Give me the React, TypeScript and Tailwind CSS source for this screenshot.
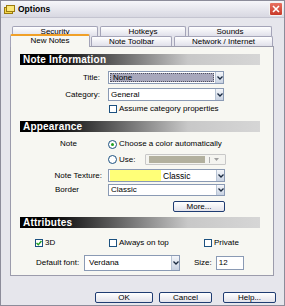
import React from "react";

const Chevron = () => (
  <svg width="6" height="4" viewBox="0 0 6 4">
    <path d="M0.5 0.5 L3 3 L5.5 0.5" fill="none" stroke="#1a2a40" strokeWidth="1.3" />
  </svg>
);

const DropBtn = ({ h }: { h: number }) => (
  <div
    className="w-[8px] flex items-center justify-center border-l border-[#b8c4d4] bg-gradient-to-b from-[#f4f6fa] to-[#c8d2e2]"
    style={{ height: h }}
  >
    <Chevron />
  </div>
);

const Header = ({ text }: { text: string }) => (
  <div className="ml-[9px] w-[240px] h-[11px] bg-[linear-gradient(to_right,#000_0%,#000_12%,#c8c8c8_70%,#d6d6d6_100%)] text-white font-bold text-[10px] leading-[11px] pl-[3px] tracking-[0.2px]">
    {text}
  </div>
);

const CheckBox = ({ checked }: { checked?: boolean }) => (
  <div className="w-[8px] h-[8px] border border-[#1c5180] bg-white flex items-center justify-center shrink-0">
    {checked && (
      <svg width="6" height="6" viewBox="0 0 6 6">
        <path d="M0.5 3 L2.3 4.8 L5.5 1" fill="none" stroke="#21a121" strokeWidth="1.4" />
      </svg>
    )}
  </div>
);

const Radio = ({ checked }: { checked?: boolean }) => (
  <div className="w-[9px] h-[9px] rounded-full border border-[#1c5180] bg-white flex items-center justify-center shrink-0">
    {checked && <div className="w-[3px] h-[3px] rounded-full bg-[#21a121]" />}
  </div>
);

const XPButton = ({ w, children }: { w: number; children: React.ReactNode }) => (
  <div
    className="h-[11px] rounded-[2px] border border-[#1f3c72] bg-gradient-to-b from-white to-[#e2e2ea] flex items-center justify-center text-[8px] leading-[9px]"
    style={{ width: w }}
  >
    {children}
  </div>
);

export default function App() {
  return (
    <div className="w-[285px] h-[306px] bg-[#e6e6ec] border border-[#8c8c9a] overflow-hidden font-['Liberation_Sans',Arial,sans-serif] text-black text-[8px] leading-[10px] flex flex-col">
      {/* Title bar */}
      <div className="h-[17px] flex items-center bg-gradient-to-b from-[#f6f6fa] to-[#d8d8e2] border-b border-[#c4c4d0] shrink-0">
        <svg width="11" height="9" viewBox="0 0 11 9" className="ml-[3px]">
          <rect x="0.5" y="2.5" width="8" height="6" fill="#f7d94a" stroke="#9a7a10" />
          <rect x="2.5" y="0.5" width="8" height="6" fill="#fbe77a" stroke="#9a7a10" />
        </svg>
        <span className="ml-[3px] font-bold text-[8.5px]">Options</span>
        <div className="ml-auto mr-[1px] w-[14px] h-[14px] rounded-[2px] border border-[#f2f2f2] bg-gradient-to-b from-[#e87060] to-[#c83828] flex items-center justify-center">
          <svg width="8" height="8" viewBox="0 0 8 8">
            <path d="M1 1 L7 7 M7 1 L1 7" stroke="white" strokeWidth="1.6" />
          </svg>
        </div>
      </div>

      {/* Tabs */}
      <div className="mt-[8px] flex flex-col">
        <div className="ml-[11px] flex gap-[2px] h-[10px]">
          {[
            ["Security", 86],
            ["Hotkeys", 86],
            ["Sounds", 84],
          ].map(([t, w]) => (
            <div
              key={t as string}
              className="h-[10px] rounded-t-[2px] border border-b-0 border-[#a4a4b8] bg-gradient-to-b from-white to-[#e0e0ea] text-center text-[8px] leading-[10px] overflow-hidden"
              style={{ width: w as number }}
            >
              {t}
            </div>
          ))}
        </div>
        <div className="ml-[9px] flex h-[10px]">
          <div className="relative z-10 -mt-[2px] w-[80px] h-[13px] border-t-2 border-t-[#f0a028] border-x border-x-[#a4a4b8] bg-[#f7f7f2] text-center text-[8px] leading-[10px] rounded-t-[2px]">
            New Notes
          </div>
          <div className="ml-[1px] w-[81px] h-[10px] rounded-t-[2px] border border-b-0 border-[#a4a4b8] bg-gradient-to-b from-white to-[#e0e0ea] text-center text-[8px] leading-[10px]">
            Note Toolbar
          </div>
          <div className="ml-[2px] w-[99px] h-[10px] rounded-t-[2px] border border-b-0 border-[#a4a4b8] bg-gradient-to-b from-white to-[#e0e0ea] text-center text-[8px] leading-[10px]">
            Network / Internet
          </div>
        </div>
      </div>

      {/* Panel */}
      <div className="ml-[9px] w-[264px] h-[230px] border border-[#9c9cac] bg-[#f7f7f2] flex flex-col">
        <div className="mt-[7px]">
          <Header text="Note Information" />
        </div>

        {/* Title */}
        <div className="mt-[6px] flex items-center h-[13px]">
          <div className="w-[89px] text-right">Title:</div>
          <div className="ml-[8px] w-[116px] h-[13px] border border-[#8a9ab4] bg-white flex">
            <div className="flex-1 m-[1px] bg-[#a8a8bc] border border-dotted border-[#505060] pl-[2px] text-[8px] leading-[8px] flex items-center">
              None
            </div>
            <DropBtn h={11} />
          </div>
        </div>

        {/* Category */}
        <div className="mt-[4px] flex items-center h-[13px]">
          <div className="w-[89px] text-right">Category:</div>
          <div className="ml-[8px] w-[116px] h-[13px] border border-[#8a9ab4] bg-white flex">
            <div className="flex-1 pl-[2px] flex items-center">General</div>
            <DropBtn h={11} />
          </div>
        </div>

        {/* Assume */}
        <div className="mt-[3px] flex items-center h-[10px] pl-[98px]">
          <CheckBox />
          <span className="ml-[2px]">Assume category properties</span>
        </div>

        <div className="mt-[7px]">
          <Header text="Appearance" />
        </div>

        {/* Note radio */}
        <div className="mt-[7px] flex items-center h-[10px]">
          <div className="w-[97px] pl-[49px]">Note</div>
          <Radio checked />
          <span className="ml-[2px]">Choose a color automatically</span>
        </div>

        {/* Use */}
        <div className="mt-[5px] flex items-center h-[11px]">
          <div className="w-[97px]" />
          <Radio />
          <span className="ml-[2px]">Use:</span>
          <div className="ml-[10px] w-[81px] h-[11px] border border-[#c8c8c8] rounded-[1px] bg-[#f4f4f0] flex items-center">
            <div className="ml-[3px] w-[56px] h-[7px] bg-[#b2b09e]" />
            <div className="ml-[4px] w-px h-[6px] bg-[#b0b0b0]" />
            <svg width="5" height="3" viewBox="0 0 5 3" className="ml-[4px]">
              <path d="M0 0 L5 0 L2.5 3 Z" fill="#a0a0a0" />
            </svg>
          </div>
        </div>

        {/* Note Texture */}
        <div className="mt-[4px] flex items-center h-[13px]">
          <div className="w-[91px] text-right">Note Texture:</div>
          <div className="ml-[6px] w-[117px] h-[13px] border border-[#8a9ab4] bg-white flex">
            <div className="flex-1 flex items-center">
              <div className="ml-[1px] w-[51px] h-[11px] bg-[#ffff78]" />
              <span className="ml-[2px] text-[8.5px]">Classic</span>
            </div>
            <DropBtn h={11} />
          </div>
        </div>

        {/* Border */}
        <div className="mt-[2px] flex items-center h-[12px]">
          <div className="w-[97px] pl-[44px]">Border</div>
          <div className="w-[117px] h-[12px] border border-[#8a9ab4] bg-white flex">
            <div className="flex-1 pl-[2px] flex items-center">Classic</div>
            <DropBtn h={10} />
          </div>
        </div>

        {/* More */}
        <div className="mt-[5px] flex pl-[162px]">
          <XPButton w={52}>More...</XPButton>
        </div>

        <div className="mt-[5px]">
          <Header text="Attributes" />
        </div>

        {/* Attributes checkboxes */}
        <div className="mt-[10px] flex items-center h-[10px]">
          <div className="pl-[24px] w-[98px] flex items-center">
            <CheckBox checked />
            <span className="ml-[2px]">3D</span>
          </div>
          <div className="w-[95px] flex items-center">
            <CheckBox />
            <span className="ml-[2px]">Always on top</span>
          </div>
          <div className="flex items-center">
            <CheckBox />
            <span className="ml-[2px]">Private</span>
          </div>
        </div>

        {/* Default font */}
        <div className="mt-[7px] flex items-center h-[16px]">
          <div className="pl-[25px] w-[73px]">Default font:</div>
          <div className="w-[96px] h-[16px] border border-[#8a9ab4] bg-white flex">
            <div className="flex-1 pl-[4px] flex items-center">Verdana</div>
            <DropBtn h={14} />
          </div>
          <div className="ml-[14px]">Size:</div>
          <div className="ml-[4px] w-[28px] h-[14px] border border-[#8a9ab4] bg-white pl-[2px] flex items-center">
            12
          </div>
        </div>
      </div>

      {/* Buttons */}
      <div className="mt-[16px] flex">
        <div className="ml-[94px]">
          <XPButton w={58}>OK</XPButton>
        </div>
        <div className="ml-[6px]">
          <XPButton w={53}>Cancel</XPButton>
        </div>
        <div className="ml-[11px]">
          <XPButton w={53}>Help...</XPButton>
        </div>
      </div>
    </div>
  );
}
